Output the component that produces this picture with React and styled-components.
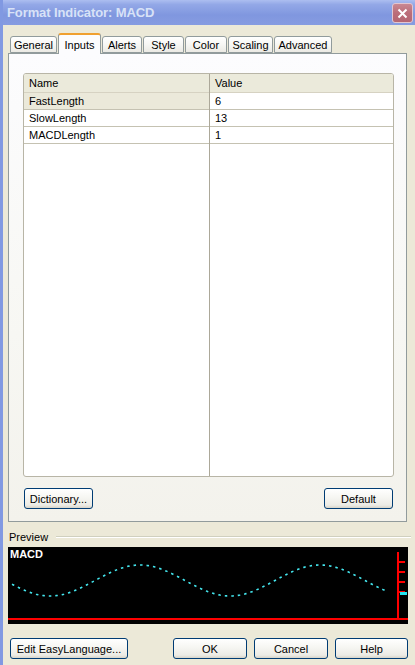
import React from 'react';
import styled, { createGlobalStyle } from 'styled-components';

const GlobalStyle = createGlobalStyle`
  html, body {
    margin: 0;
    padding: 0;
    background: #ece9d8;
  }
  * {
    box-sizing: border-box;
  }
`;

const Window = styled.div`
  width: 415px;
  height: 665px;
  display: flex;
  flex-direction: column;
  background: #ece9d8;
  border-left: 3px solid #8199e2;
  font-family: "Liberation Sans", Arial, sans-serif;
  font-size: 11px;
  color: #000;
  overflow: hidden;
`;

const TitleBar = styled.div`
  height: 25px;
  flex-shrink: 0;
  display: flex;
  align-items: center;
  justify-content: space-between;
  padding: 0 2px 0 4px;
  background: linear-gradient(180deg, #acbef0 0%, #93a8e7 18%, #8097df 60%, #869ce1 100%);
`;

const Title = styled.div`
  font-family: "Liberation Sans", Arial, sans-serif;
  font-weight: bold;
  font-size: 13px;
  color: #d8e2f7;
  letter-spacing: -0.1px;
`;

const CloseButton = styled.div`
  width: 21px;
  height: 20px;
  margin-top: 1px;
  border: 1px solid #e2c6d0;
  border-radius: 3px;
  background: linear-gradient(180deg, #c98892 0%, #bb6d79 50%, #b46673 100%);
  display: flex;
  align-items: center;
  justify-content: center;
`;

const Body = styled.div`
  flex: 1;
  display: flex;
  flex-direction: column;
  padding: 0 4px 0 5px;
`;

const TabStrip = styled.div`
  display: flex;
  align-items: flex-end;
  gap: 1px;
  height: 20px;
  margin-top: 8px;
  padding-left: 2px;
  position: relative;
  z-index: 1;
`;

const Tab = styled.div`
  width: ${(p) => p.$w}px;
  height: ${(p) => (p.$active ? 21 : 17)}px;
  margin-bottom: ${(p) => (p.$active ? -1 : 0)}px;
  display: flex;
  align-items: center;
  justify-content: center;
  padding-top: ${(p) => (p.$active ? 0 : 1)}px;
  border: 1px solid #919b9c;
  border-bottom: ${(p) => (p.$active ? 'none' : '1px solid #919b9c')};
  border-top: ${(p) => (p.$active ? '2px solid #f0a030' : '1px solid #919b9c')};
  border-radius: 3px 3px 0 0;
  background: ${(p) =>
    p.$active ? '#fcfcfe' : 'linear-gradient(180deg, #ffffff 0%, #f7f7f4 50%, #ebeae4 100%)'};
`;

const Panel = styled.div`
  width: 399px;
  height: 469px;
  flex-shrink: 0;
  display: flex;
  flex-direction: column;
  padding: 19px 13px 0 14px;
  border: 1px solid #919b9c;
  background: linear-gradient(180deg, #fcfcfe 0%, #f7f7f3 60%, #f3f2ec 100%);
`;

const Grid = styled.div`
  width: 371px;
  height: 404px;
  flex-shrink: 0;
  display: flex;
  flex-direction: column;
  border: 1px solid #b8b5a6;
  border-radius: 3px;
  background: #fff;
  position: relative;
  overflow: hidden;
`;

const ColumnRule = styled.div`
  position: absolute;
  top: 0;
  bottom: 0;
  left: 185px;
  width: 1px;
  background: #aca899;
`;

const Row = styled.div`
  display: grid;
  grid-template-columns: 185px 1fr;
  height: ${(p) => (p.$head ? 19 : 17)}px;
  border-bottom: 1px solid ${(p) => (p.$head ? '#d6d2c2' : '#c5c2b2')};
  background: ${(p) => (p.$head ? '#ebeadb' : '#fff')};
`;

const Cell = styled.div`
  display: flex;
  align-items: center;
  padding-left: ${(p) => (p.$right ? 6 : 5)}px;
  background: ${(p) => (p.$shade ? '#ebe9da' : 'transparent')};
  white-space: nowrap;
`;

const ButtonRow = styled.div`
  display: flex;
  justify-content: space-between;
  margin-top: 11px;
  padding: 0 0 0 1px;
`;

const Button = styled.div`
  width: ${(p) => p.$w}px;
  height: 21px;
  display: flex;
  align-items: center;
  justify-content: center;
  border: 1px solid #003c74;
  border-radius: 3px;
  background: linear-gradient(180deg, #ffffff 0%, #f6f6f2 45%, #ecebe5 85%, #d8d4c8 100%);
  white-space: nowrap;
`;

const PreviewLabel = styled.div`
  display: flex;
  align-items: center;
  gap: 8px;
  height: 12px;
  margin-top: 9px;
  padding-left: 1px;
`;

const EtchedLine = styled.div`
  flex: 1;
  height: 2px;
  border-top: 1px solid #d0d0bf;
  border-bottom: 1px solid #fff;
`;

const Chart = styled.div`
  width: 400px;
  height: 77px;
  margin-top: 4px;
  flex-shrink: 0;
  background: #000;
  position: relative;
`;

const ChartLabel = styled.div`
  position: absolute;
  left: 2px;
  top: 1px;
  color: #fff;
  font-weight: bold;
  font-size: 11px;
`;

const Footer = styled.div`
  display: flex;
  gap: 7px;
  margin-top: 14px;
  padding-left: 2px;
`;

const Spacer = styled.div`
  width: 31px;
`;

const tabs = [
  ['General', 47],
  ['Inputs', 43],
  ['Alerts', 40],
  ['Style', 41],
  ['Color', 42],
  ['Scaling', 45],
  ['Advanced', 58],
];

const inputs = [
  ['FastLength', '6'],
  ['SlowLength', '13'],
  ['MACDLength', '1'],
];

// sine trace of the MACD preview, in chart coordinates
const wave = (() => {
  const pts = [];
  for (let x = 12; x <= 386; x += 1) {
    const y = 33.5 - 15.5 * Math.cos((2 * Math.PI * (x - 140)) / 180);
    pts.push(`${x - 8},${y.toFixed(2)}`);
  }
  return 'M' + pts.join(' L');
})();

function PreviewChart() {
  return (
    <Chart>
      <svg width="400" height="77" style={{ display: 'block' }}>
        <path d={wave} fill="none" stroke="#44e6ee" strokeWidth="1.6" strokeDasharray="2.5 4" />
        <rect x="0" y="71" width="400" height="2" fill="#ff0000" />
        <rect x="389" y="5" width="2" height="68" fill="#ff0000" />
        {[14, 24, 34, 44].map((y) => (
          <rect key={y} x="391" y={y} width="6" height="2" fill="#ff0000" />
        ))}
        <rect x="392" y="45" width="7" height="3" fill="#22e6f0" />
      </svg>
      <ChartLabel>MACD</ChartLabel>
    </Chart>
  );
}

export default function App() {
  return (
    <>
      <GlobalStyle />
      <Window>
        <TitleBar>
          <Title>Format Indicator: MACD</Title>
          <CloseButton>
            <svg width="11" height="11" viewBox="0 0 11 11">
              <path d="M1.5 1.5 L9.5 9.5 M9.5 1.5 L1.5 9.5" stroke="#fff" strokeWidth="2" />
            </svg>
          </CloseButton>
        </TitleBar>
        <Body>
          <TabStrip>
            {tabs.map(([name, w]) => (
              <Tab key={name} $w={w} $active={name === 'Inputs'}>
                {name}
              </Tab>
            ))}
          </TabStrip>
          <Panel>
            <Grid>
              <Row $head>
                <Cell>Name</Cell>
                <Cell $right>Value</Cell>
              </Row>
              {inputs.map(([name, value], i) => (
                <Row key={name}>
                  <Cell $shade={i === 0}>{name}</Cell>
                  <Cell $right>{value}</Cell>
                </Row>
              ))}
              <ColumnRule />
            </Grid>
            <ButtonRow>
              <Button $w={69}>Dictionary...</Button>
              <Button $w={69}>Default</Button>
            </ButtonRow>
          </Panel>
          <PreviewLabel>
            Preview
            <EtchedLine />
          </PreviewLabel>
          <PreviewChart />
          <Footer>
            <Button $w={118}>Edit EasyLanguage...</Button>
            <Spacer />
            <Button $w={74}>OK</Button>
            <Button $w={74}>Cancel</Button>
            <Button $w={73}>Help</Button>
          </Footer>
        </Body>
      </Window>
    </>
  );
}
